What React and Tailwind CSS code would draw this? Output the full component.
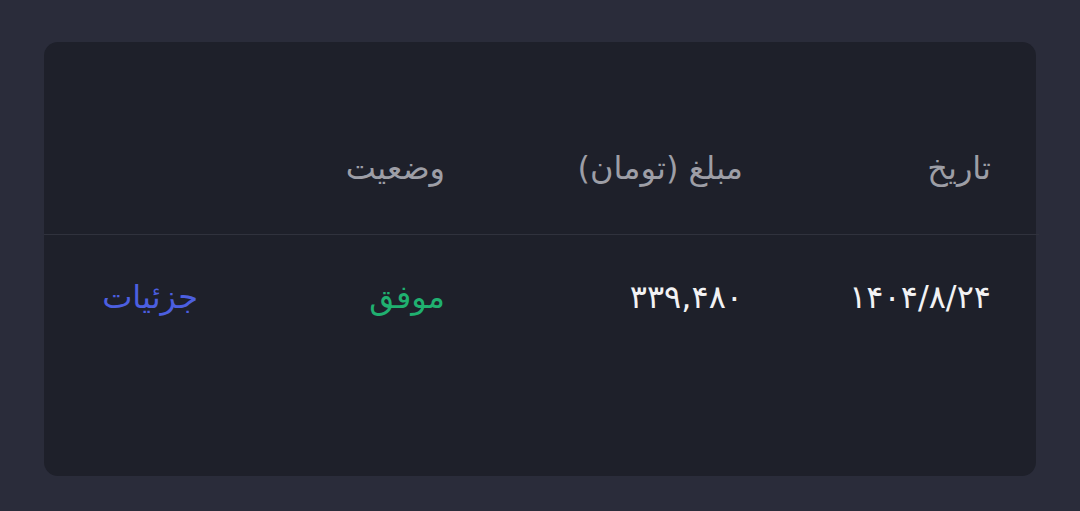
export default function App() {
  return (
    <div className="w-[1080px] h-[511px] bg-[#2a2c3a] pt-[42px] px-[44px]" style={{ fontFamily: '"DejaVu Sans", "Noto Sans", sans-serif' }}>
      <div dir="rtl" className="w-[992px] h-[434px] rounded-[14px] bg-[#1e202a] flex flex-col">
        <div className="grid grid-cols-[248px_298px_247px_1fr] pr-[48px] -mr-[3px] pt-[104px] pb-[44px] border-b border-[#30323d] text-[32px] leading-[44px] text-[#9d9ea6]">
          <div>تاریخ</div>
          <div>مبلغ (تومان)</div>
          <div>وضعیت</div>
          <div></div>
        </div>
        <div className="grid grid-cols-[248px_298px_247px_1fr] pr-[45px] pt-[40px] text-[32px] leading-[44px]">
          <div className="text-[#f2f2f4]">۱۴۰۴/۸/۲۴</div>
          <div className="text-[#f2f2f4]">۳۳۹,۴۸۰</div>
          <div className="text-[#20b070]">موفق</div>
          <div className="text-[#4c5fe0]">جزئیات</div>
        </div>
      </div>
    </div>
  );
}
